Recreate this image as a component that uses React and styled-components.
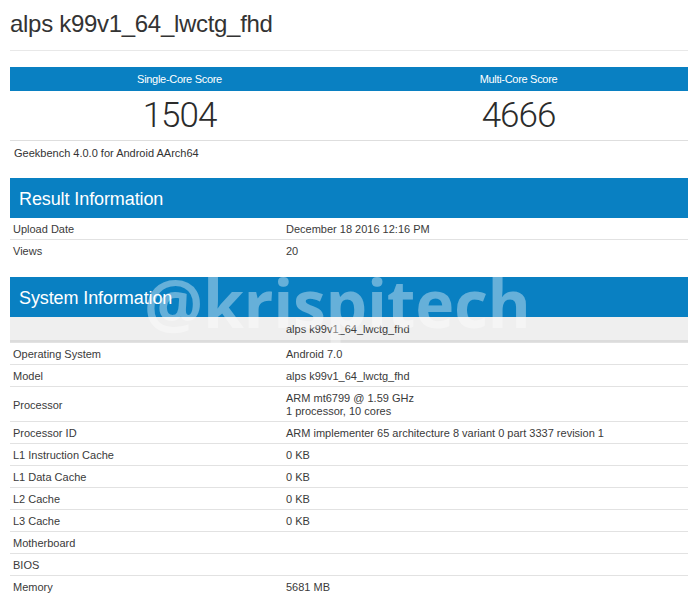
import React from 'react';
import styled, { createGlobalStyle } from 'styled-components';

const Blue = '#0980c2';
const LABEL_WIDTH = 273;

const GlobalStyle = createGlobalStyle`
  body {
    margin: 0;
    background: #fff;
    font-family: "Liberation Sans", Arial, sans-serif;
    color: #333;
  }
`;

const Page = styled.div`
  padding: 0 2px 0 10px;
`;

const Title = styled.h1`
  margin: 9px 0 12px;
  font-size: 24px;
  line-height: 29px;
  font-weight: normal;
  letter-spacing: -0.3px;
  color: #333;
`;

const Rule = styled.div`
  height: 1px;
  background: #e8e8e8;
  margin-bottom: 16px;
`;

const ScoreGrid = styled.div`
  display: grid;
  grid-template-columns: 1fr 1fr;
  border-bottom: 1px solid #dedede;
`;

const ScoreHead = styled.div`
  background: ${Blue};
  color: #fff;
  font-size: 11px;
  line-height: 24px;
  text-align: center;
  letter-spacing: -0.3px;
`;

const ScoreValue = styled.div`
  font-family: Roboto, "Liberation Sans", sans-serif;
  font-weight: 300;
  font-size: 35px;
  line-height: 49px;
  text-align: center;
  letter-spacing: -1px;
  color: #2b2b2b;
`;

const Platform = styled.div`
  padding: 6px 4px 0;
  font-size: 11px;
  line-height: 13px;
  margin-bottom: 18px;
`;

const Section = styled.section`
  position: relative;
  margin-bottom: 16px;
`;

const SectionHead = styled.h2`
  margin: 0;
  background: ${Blue};
  color: #fff;
  font-size: 18px;
  font-weight: normal;
  line-height: 37px;
  padding: 3px 0 0 9px;
  letter-spacing: -0.1px;
`;

const Row = styled.div`
  display: grid;
  grid-template-columns: ${LABEL_WIDTH}px 1fr;
  align-items: center;
  font-size: 11px;
  line-height: 13px;
  background: ${p => (p.$shaded ? '#efefef' : '#fff')};
  border-bottom: ${p => (p.$shaded ? '2px solid #dcdcdc' : 'none')};

  & + & {
    border-top: 1px solid #e2e2e2;
  }
`;

const Cell = styled.div`
  padding: ${p => (p.$shaded ? '6px 3px 4px' : '5px 3px 3px')};
  color: #3a3a3a;
`;

const Watermark = styled.div`
  position: absolute;
  left: 134px;
  top: -8px;
  font-family: "Open Sans", sans-serif;
  font-weight: 700;
  font-size: 66px;
  line-height: 66px;
  letter-spacing: -0.3px;
  color: rgba(255, 255, 255, 0.38);
  pointer-events: none;
  white-space: nowrap;
`;

const resultRows = [
  ['Upload Date', 'December 18 2016 12:16 PM'],
  ['Views', '20'],
];

const systemRows = [
  ['Operating System', 'Android 7.0'],
  ['Model', 'alps k99v1_64_lwctg_fhd'],
  ['Processor', 'ARM mt6799 @ 1.59 GHz\n1 processor, 10 cores'],
  ['Processor ID', 'ARM implementer 65 architecture 8 variant 0 part 3337 revision 1'],
  ['L1 Instruction Cache', '0 KB'],
  ['L1 Data Cache', '0 KB'],
  ['L2 Cache', '0 KB'],
  ['L3 Cache', '0 KB'],
  ['Motherboard', ''],
  ['BIOS', ''],
  ['Memory', '5681 MB'],
];

function InfoRow({ label, value }) {
  return (
    <Row>
      <Cell>{label}</Cell>
      <Cell>
        {value.split('\n').map((line, i) => (
          <div key={i}>{line || '\u00a0'}</div>
        ))}
      </Cell>
    </Row>
  );
}

export default function App() {
  return (
    <Page>
      <GlobalStyle />
      <Title>alps k99v1_64_lwctg_fhd</Title>
      <Rule />

      <ScoreGrid>
        <ScoreHead>Single-Core Score</ScoreHead>
        <ScoreHead>Multi-Core Score</ScoreHead>
        <ScoreValue>1504</ScoreValue>
        <ScoreValue>4666</ScoreValue>
      </ScoreGrid>
      <Platform>Geekbench 4.0.0 for Android AArch64</Platform>

      <Section>
        <SectionHead>Result Information</SectionHead>
        {resultRows.map(([l, v]) => (
          <InfoRow key={l} label={l} value={v} />
        ))}
      </Section>

      <Section>
        <SectionHead>System Information</SectionHead>
        <Row $shaded>
          <Cell $shaded>{'\u00a0'}</Cell>
          <Cell $shaded>alps k99v1_64_lwctg_fhd</Cell>
        </Row>
        {systemRows.map(([l, v]) => (
          <InfoRow key={l} label={l} value={v} />
        ))}
        <Watermark>@krispitech</Watermark>
      </Section>
    </Page>
  );
}
